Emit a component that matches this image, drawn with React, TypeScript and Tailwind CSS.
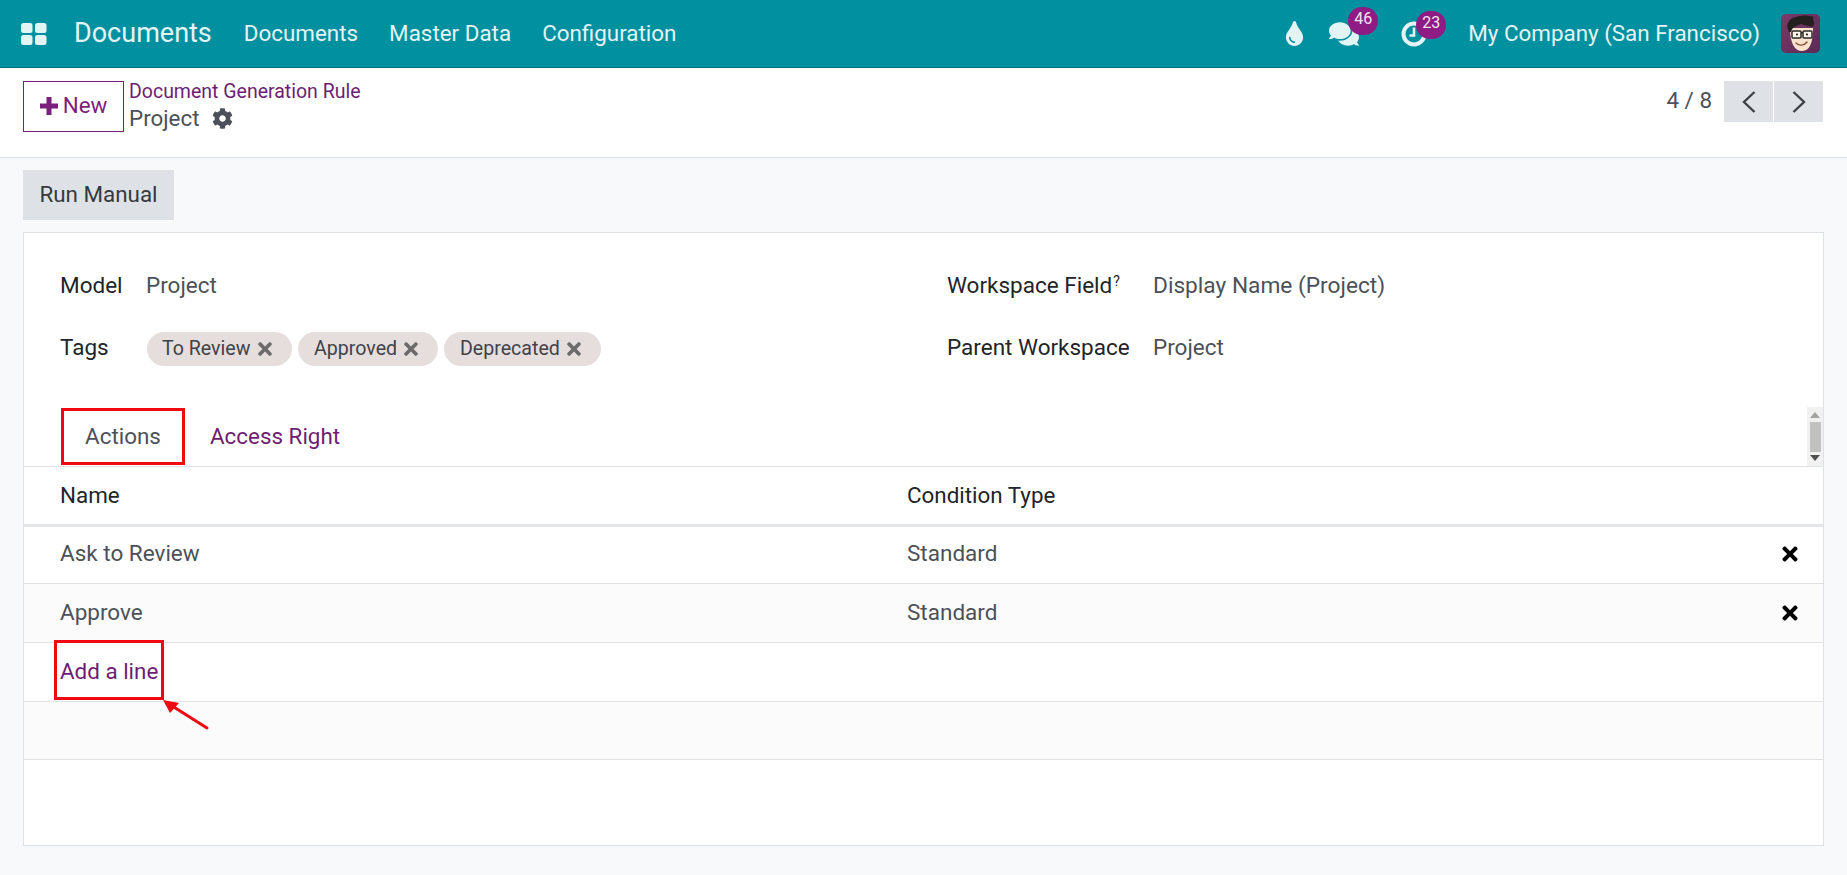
import React from "react";
import { FaTint, FaComments, FaCog, FaTimes } from "react-icons/fa";

function AppsIcon() {
  return (
    <svg width="26" height="22" viewBox="0 0 26 22" className="shrink-0">
      <rect x="0" y="0" width="11.5" height="10" rx="2.5" fill="#e3f4f5" />
      <rect x="14" y="0" width="11.5" height="10" rx="2.5" fill="#e3f4f5" />
      <rect x="0" y="12" width="11.5" height="10" rx="2.5" fill="#e3f4f5" />
      <rect x="14" y="12" width="11.5" height="10" rx="2.5" fill="#e3f4f5" />
    </svg>
  );
}

function ClockIcon() {
  return (
    <svg width="26" height="26" viewBox="0 0 26 26">
      <circle cx="13" cy="13" r="10.5" fill="none" stroke="#e3f4f5" strokeWidth="4" />
      <path d="M13 6.5 V14.5 H8.5" fill="none" stroke="#e3f4f5" strokeWidth="2.6" />
    </svg>
  );
}

function Avatar() {
  return (
    <svg width="39" height="39" viewBox="0 0 39 39" className="shrink-0">
      <defs>
        <linearGradient id="avbg" x1="0" y1="0" x2="1" y2="1">
          <stop offset="0" stopColor="#7a3a68" />
          <stop offset="1" stopColor="#5b2a55" />
        </linearGradient>
      </defs>
      <rect width="39" height="39" rx="5" fill="url(#avbg)" />
      <path d="M9 14 C9 30 14 37 21 37 C29 37 32 28 32 14 Z" fill="#fbe3cb" />
      <path d="M7 16 C5 10 8 4 15 3 C20 1 28 1 33 3 C31 5 33 6 33 9 C33 11 32 12 31 13 C27 11 24 12 20 10 C17 12 12 11 10 18 L8 18 Z" fill="#23201f" />
      <rect x="11" y="17" width="9" height="7" rx="1" fill="#fff" fillOpacity="0.6" stroke="#2a2a2a" strokeWidth="1.5" />
      <rect x="22" y="17" width="9" height="7" rx="1" fill="#fff" fillOpacity="0.6" stroke="#2a2a2a" strokeWidth="1.5" />
      <path d="M20 19 H22" stroke="#2a2a2a" strokeWidth="1.4" />
      <circle cx="16" cy="20.5" r="1.1" fill="#222" />
      <circle cx="26" cy="20.5" r="1.1" fill="#222" />
      <path d="M15 29 C18 32 23 32 26 28" fill="none" stroke="#8c4a38" strokeWidth="1.4" strokeLinecap="round" />
    </svg>
  );
}

function Badge({ n, className }: { n: string; className: string }) {
  return (
    <span className={`absolute flex h-[28px] w-[30px] items-center justify-center rounded-full bg-[#8f1c84] pb-[4px] text-[16px] leading-none text-[#f1e4f0] ${className}`}>
      {n}
    </span>
  );
}

function Tag({ label, width }: { label: string; width: string }) {
  return (
    <span className={`flex h-[34px] items-center justify-between rounded-full bg-[#e6dedd] pr-[17px] text-[19.6px] text-[#3f4349] ${width}`}>
      <span>{label}</span>
      <FaTimes className="text-[20px] text-[#6b6b6b]" />
    </span>
  );
}

function Row({ name, stripe, height }: { name: string; stripe?: boolean; height: string }) {
  return (
    <div className={`flex items-center border-b border-[#e0e2e6] text-[22.5px] text-[#4c5159] ${height} ${stripe ? "bg-[#fbfbfc] pb-[1px]" : "bg-white pb-[3px]"}`}>
      <span className="w-[883px] pl-[36px]">{name}</span>
      <span className="flex-1">Standard</span>
      <FaTimes className="mr-[22px] text-[22px] text-black" />
    </div>
  );
}

export default function App() {
  return (
    <div className="relative flex h-[875px] flex-col overflow-hidden bg-[#f8f9fa] font-['Roboto',sans-serif]">
      <header className="flex h-[68px] shrink-0 items-center border-b border-[#03707c] bg-[#00909f] pl-[21px] pr-[27px] text-[#e3f4f5]">
        <AppsIcon />
        <span className="ml-[27px] text-[27px]">Documents</span>
        <nav className="ml-[32px] flex gap-[31px] text-[22.4px]">
          <span>Documents</span>
          <span>Master Data</span>
          <span>Configuration</span>
        </nav>
        <div className="ml-auto flex items-center">
          <FaTint className="text-[25px]" />
          <span className="relative ml-[22px] flex">
            <FaComments className="text-[30px]" />
            <Badge n="46" className="left-[19px] top-[-12px]" />
          </span>
          <span className="relative ml-[42px] flex">
            <ClockIcon />
            <Badge n="23" className="left-[15px] top-[-10px]" />
          </span>
          <span className="ml-[41px] text-[22.4px]">My Company (San Francisco)</span>
          <span className="ml-[21px]"><Avatar /></span>
        </div>
      </header>

      <section className="flex h-[90px] shrink-0 justify-between border-b border-[#dee2e6] bg-white pl-[23px] pr-[24px]">
        <div className="flex items-start pt-[13px]">
          <button className="flex h-[51px] w-[101px] items-center justify-center gap-[5px] border border-[#7b1f7d] pb-[2px] text-[22.4px] text-[#7b1f7d]">
            <svg width="18" height="18" viewBox="0 0 18 18"><path d="M9 0 V18 M0 9 H18" stroke="#7b1f7d" strokeWidth="5" /></svg>
            New
          </button>
          <div className="ml-[5px] -mt-[2px] flex flex-col">
            <span className="text-[19.5px] leading-[26px] text-[#6f1d73]">Document Generation Rule</span>
            <span className="flex items-center gap-[12px] text-[22.4px] leading-[27px] text-[#4c5159]">
              Project
              <FaCog className="text-[21px]" />
            </span>
          </div>
        </div>
        <div className="flex items-start pt-[13px]">
          <span className="mr-[12px] mt-[3px] text-[22.4px] text-[#4c5159]">4 / 8</span>
          <div className="flex gap-px">
            <span className="flex h-[41px] w-[49px] items-center justify-center bg-[#dee2e6]">
              <svg width="14" height="22" viewBox="0 0 14 22"><path d="M12.5 1 L2 11 L12.5 21" fill="none" stroke="#3c4248" strokeWidth="2.4" /></svg>
            </span>
            <span className="flex h-[41px] w-[49px] items-center justify-center bg-[#dee2e6]">
              <svg width="14" height="22" viewBox="0 0 14 22"><path d="M1.5 1 L12 11 L1.5 21" fill="none" stroke="#3c4248" strokeWidth="2.4" /></svg>
            </span>
          </div>
        </div>
      </section>

      <main className="flex flex-1 flex-col px-[23px] pb-[29px] pt-[12px]">
        <button className="flex h-[50px] w-[151px] shrink-0 items-center justify-center bg-[#dee2e6] text-[22.4px] text-[#343a40]">
          Run Manual
        </button>
        <div className="relative mt-[12px] flex flex-1 flex-col border border-[#dee2e6] bg-white">
          <div className="flex px-[36px] pt-[33px] text-[22.5px]">
            <div className="w-[887px]">
              <div className="flex h-[40px] items-center">
                <span className="w-[86px] text-[#212529]">Model</span>
                <span className="text-[#4c5159]">Project</span>
              </div>
              <div className="mt-[22px] flex h-[40px] items-center">
                <span className="w-[87px] text-[#212529]">Tags</span>
                <div className="flex translate-y-[1px] gap-[6px]">
                  <Tag label="To Review" width="w-[145px] pl-[15px]" />
                  <Tag label="Approved" width="w-[140px] pl-[16px]" />
                  <Tag label="Deprecated" width="w-[157px] pl-[16px]" />
                </div>
              </div>
            </div>
            <div>
              <div className="flex h-[40px] items-center">
                <span className="w-[206px] text-[#212529]">
                  Workspace Field<sup className="ml-px text-[14px]">?</sup>
                </span>
                <span className="text-[22.7px] text-[#4c5159]">Display Name (Project)</span>
              </div>
              <div className="mt-[22px] flex h-[40px] items-center">
                <span className="w-[206px] text-[#212529]">Parent Workspace</span>
                <span className="text-[#4c5159]">Project</span>
              </div>
            </div>
          </div>

          <div className="mt-[39px] flex h-[60px] items-stretch justify-between border-b border-[#dee2e6] pl-[37px]">
            <div className="flex items-stretch text-[22.4px]">
              <span className="mt-[1px] flex h-[57px] w-[124px] items-center justify-center border-[3px] border-[#ee0a10] text-[#4c5159]">
                Actions
              </span>
              <span className="ml-[25px] flex items-center text-[#6f1d73]">Access Right</span>
            </div>
            <div className="flex w-[16px] flex-col items-center justify-between bg-[#f1f1f1] py-[5px]">
              <svg width="10" height="6" viewBox="0 0 10 6"><path d="M5 0 L10 6 H0 Z" fill="#a3a3a3" /></svg>
              <span className="h-[30px] w-[11px] bg-[#c1c1c1]" />
              <svg width="10" height="6" viewBox="0 0 10 6"><path d="M0 0 H10 L5 6 Z" fill="#505050" /></svg>
            </div>
          </div>

          <div className="flex h-[60px] shrink-0 items-center border-b-[3px] border-[#e4e6e9] text-[22.4px] text-[#212529]">
            <span className="w-[883px] pl-[36px]">Name</span>
            <span>Condition Type</span>
          </div>
          <Row name="Ask to Review" height="h-[57px]" />
          <Row name="Approve" stripe height="h-[59px]" />
          <div className="relative flex h-[59px] items-center border-b border-[#e0e2e6] pl-[36px] text-[22.4px] text-[#6f1d73]">
            Add a line
            <span className="absolute left-[30px] top-[-3px] h-[60px] w-[110px] border-[3px] border-[#ee0a10]" />
          </div>
          <div className="h-[58px] border-b border-[#e0e2e6] bg-[#fbfbfc]" />

          <svg width="52" height="34" viewBox="0 0 52 34" className="absolute left-[136px] top-[465px]">
            <path d="M47 30 L9 6" stroke="#ee0a10" strokeWidth="3" strokeLinecap="round" />
            <path d="M3 2 L19 5 L10 15 Z" fill="#ee0a10" />
          </svg>
        </div>
      </main>
    </div>
  );
}
